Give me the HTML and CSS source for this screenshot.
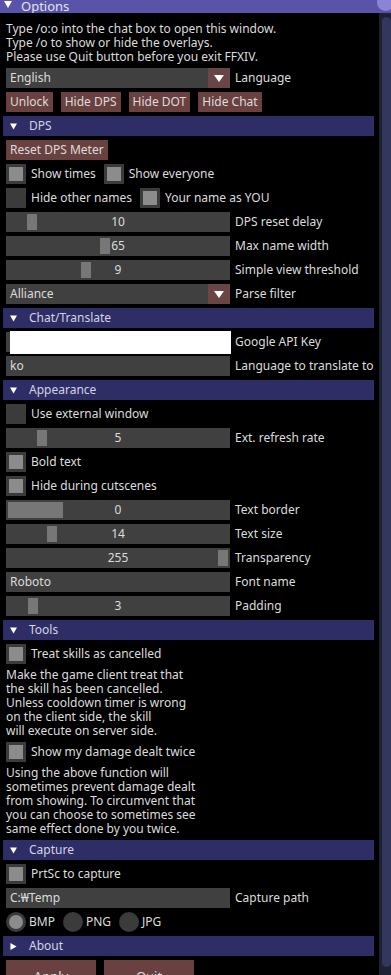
FILE: index.html
```html
<!DOCTYPE html>
<html lang="en">
<head>
<meta charset="UTF-8">
<meta name="viewport" content="width=device-width, initial-scale=1.0">
<title>Options</title>
<link rel="stylesheet" href="styles.css">
</head>
<body>
    <div class="titlebar">
        <svg class="tri" width="8" height="7" viewBox="0 0 8 7"><polygon points="0,0 8,0 4,7" fill="#fff"/></svg>
        <span>Options</span>
        <span class="close"></span>
    </div>
    <div class="frame">
        <div class="content">
            <div class="text">Type /o:o into the chat box to open this window.<br>Type /o to show or hide the overlays.<br>Please use Quit button before you exit FFXIV.</div>

            <div class="row">
                <div class="combo"><span>English</span><span class="arrow"><svg width="10" height="7" viewBox="0 0 10 7"><polygon points="0,0 10,0 5,7" fill="#fff"/></svg></span></div>
                <span>Language</span>
            </div>
            <div class="row buttons">
                <button class="btn">Unlock</button>
                <button class="btn">Hide DPS</button>
                <button class="btn">Hide DOT</button>
                <button class="btn">Hide Chat</button>
            </div>

            <div class="header"><svg width="7" height="7" viewBox="0 0 8 7"><polygon points="0,0 8,0 4,7" fill="#fff"/></svg>DPS</div>
            <div class="row"><button class="btn">Reset DPS Meter</button></div>
            <div class="row buttons">
                <label class="check on"><span class="box"></span>Show times</label>
                <label class="check on"><span class="box"></span>Show everyone</label>
            </div>
            <div class="row buttons">
                <label class="check"><span class="box"></span>Hide other names</label>
                <label class="check on"><span class="box"></span>Your name as YOU</label>
            </div>
            <div class="row">
                <div class="slider"><span class="grab" style="left:21px"></span>10</div>
                <span>DPS reset delay</span>
            </div>
            <div class="row">
                <div class="slider"><span class="grab" style="left:94px"></span>65</div>
                <span>Max name width</span>
            </div>
            <div class="row">
                <div class="slider"><span class="grab" style="left:75px"></span>9</div>
                <span>Simple view threshold</span>
            </div>
            <div class="row">
                <div class="combo"><span>Alliance</span><span class="arrow"><svg width="10" height="7" viewBox="0 0 10 7"><polygon points="0,0 10,0 5,7" fill="#fff"/></svg></span></div>
                <span>Parse filter</span>
            </div>

            <div class="header"><svg width="7" height="7" viewBox="0 0 8 7"><polygon points="0,0 8,0 4,7" fill="#fff"/></svg>Chat/Translate</div>
            <div class="row">
                <div class="input key"><span class="ime"></span></div>
                <span>Google API Key</span>
            </div>
            <div class="row">
                <div class="input">ko</div>
                <span>Language to translate to</span>
            </div>

            <div class="header"><svg width="7" height="7" viewBox="0 0 8 7"><polygon points="0,0 8,0 4,7" fill="#fff"/></svg>Appearance</div>
            <div class="row"><label class="check"><span class="box"></span>Use external window</label></div>
            <div class="row">
                <div class="slider"><span class="grab" style="left:31px"></span>5</div>
                <span>Ext. refresh rate</span>
            </div>
            <div class="row"><label class="check on"><span class="box"></span>Bold text</label></div>
            <div class="row"><label class="check on"><span class="box"></span>Hide during cutscenes</label></div>
            <div class="row">
                <div class="slider"><span class="grab" style="left:2px;width:55px"></span>0</div>
                <span>Text border</span>
            </div>
            <div class="row">
                <div class="slider"><span class="grab" style="left:41px"></span>14</div>
                <span>Text size</span>
            </div>
            <div class="row">
                <div class="slider"><span class="grab" style="left:212px"></span>255</div>
                <span>Transparency</span>
            </div>
            <div class="row">
                <div class="input">Roboto</div>
                <span>Font name</span>
            </div>
            <div class="row">
                <div class="slider"><span class="grab" style="left:22px"></span>3</div>
                <span>Padding</span>
            </div>

            <div class="header"><svg width="7" height="7" viewBox="0 0 8 7"><polygon points="0,0 8,0 4,7" fill="#fff"/></svg>Tools</div>
            <div class="row"><label class="check on"><span class="box"></span>Treat skills as cancelled</label></div>
            <div class="text">Make the game client treat that<br>the skill has been cancelled.<br>Unless cooldown timer is wrong<br>on the client side, the skill<br>will execute on server side.</div>
            <div class="row"><label class="check on"><span class="box"></span>Show my damage dealt twice</label></div>
            <div class="text">Using the above function will<br>sometimes prevent damage dealt<br>from showing. To circumvent that<br>you can choose to sometimes see<br>same effect done by you twice.</div>

            <div class="header"><svg width="7" height="7" viewBox="0 0 8 7"><polygon points="0,0 8,0 4,7" fill="#fff"/></svg>Capture</div>
            <div class="row"><label class="check on"><span class="box"></span>PrtSc to capture</label></div>
            <div class="row">
                <div class="input">C:₩Temp</div>
                <span>Capture path</span>
            </div>
            <div class="row radios">
                <label class="radio on"><span class="dot"></span>BMP</label>
                <label class="radio"><span class="dot"></span>PNG</label>
                <label class="radio"><span class="dot"></span>JPG</label>
            </div>

            <div class="header"><svg width="7" height="7" viewBox="0 0 7 8"><polygon points="0,0 7,4 0,8" fill="#fff"/></svg>About</div>
            <div class="row big">
                <button class="btn wide">Apply</button>
                <button class="btn wide">Quit</button>
            </div>
        </div>
        <div class="scrollbar"><div class="thumb"></div></div>
    </div>
</body>
</html>
```

FILE: styles.css
```css
body {
    margin: 0;
    padding: 0;
    background: #000;
    color: #dcdcdc;
    font-family: "Noto Sans", "Open Sans", sans-serif;
    font-size: 12px;
    line-height: 14px;
    height: 975px;
    overflow: hidden;
}

.titlebar {
    position: relative;
    height: 13px;
    background: #5953a9;
    display: flex;
    align-items: flex-start;
    gap: 9px;
    padding-left: 4px;
    color: #e4e2f4;
    font-size: 13px;
    line-height: 13px;
    overflow: hidden;
}

.titlebar .tri {
    margin-top: 1px;
}

.close {
    position: absolute;
    right: -3px;
    top: -6px;
    width: 17px;
    height: 17px;
    border-radius: 50%;
    background: #8a83d6;
}

.frame {
    display: flex;
    height: 962px;
}

.content {
    width: 368px;
    padding: 9px 5px 0 6px;
    display: flex;
    flex-direction: column;
    gap: 4px;
}

.content > * {
    flex-shrink: 0;
}

.text {
    white-space: nowrap;
}

.row {
    display: flex;
    align-items: center;
    gap: 5px;
    height: 20px;
    white-space: nowrap;
}

.row.buttons {
    gap: 8px;
}

.btn {
    font: inherit;
    color: #dcdcdc;
    background: #6a4141;
    border: none;
    height: 20px;
    padding: 0 4px;
    margin: 0;
}

.row.big {
    height: 32px;
    align-items: flex-start;
    gap: 8px;
}

.btn.wide {
    width: 90px;
    height: 32px;
    font-size: 13px;
}

.combo, .slider, .input {
    width: 224px;
    height: 20px;
    background: #404040;
    box-sizing: border-box;
    flex-shrink: 0;
}

.combo {
    display: flex;
    justify-content: space-between;
    padding-left: 4px;
    line-height: 20px;
}

.arrow {
    width: 22px;
    height: 20px;
    background: #6a4545;
    display: flex;
    align-items: center;
    justify-content: center;
}

.slider {
    position: relative;
    text-align: center;
    line-height: 20px;
}

.grab {
    position: absolute;
    top: 2px;
    width: 10px;
    height: 16px;
    background: #777;
}

.input {
    padding-left: 4px;
    line-height: 20px;
}

.ime {
    display: block;
    width: 221px;
    height: 23px;
    margin-top: -1px;
    background: #fff;
}

.header {
    margin-left: -3px;
    height: 20px;
    background: #2e2d66;
    display: flex;
    align-items: center;
    gap: 12px;
    padding-left: 7px;
    color: #d4d4e4;
}

.check {
    display: flex;
    align-items: center;
    gap: 5px;
}

.box {
    width: 20px;
    height: 20px;
    background: #3b3b3b;
    box-sizing: border-box;
    border: 3px solid #3b3b3b;
}

.check.on .box {
    background: #8c8c8c;
}

.row.radios {
    gap: 8px;
}

.radio {
    display: flex;
    align-items: center;
    gap: 3px;
}

.dot {
    width: 20px;
    height: 20px;
    border-radius: 50%;
    background: #3b3b3b;
    box-sizing: border-box;
    border: 3px solid #3b3b3b;
}

.radio.on .dot {
    background: #8c8c8c;
}

.scrollbar {
    width: 12px;
    background: #1d2131;
    padding: 4px 0 0 3px;
    box-sizing: border-box;
}

.thumb {
    height: 950px;
    background: #33375e;
    border-radius: 5px;
}
```
